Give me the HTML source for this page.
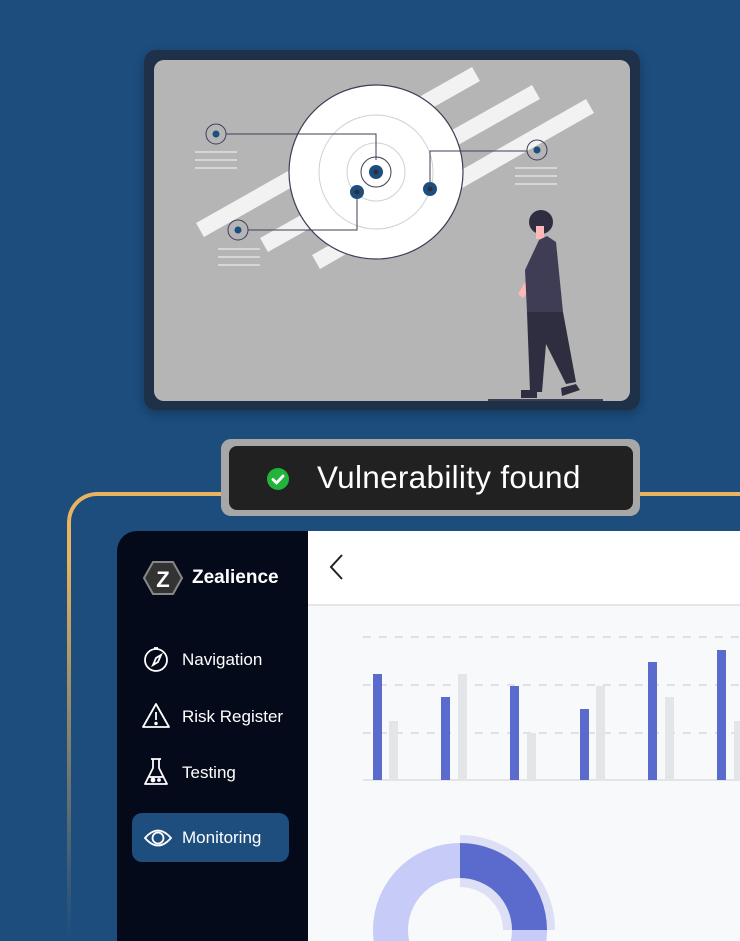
<!DOCTYPE html>
<html><head><meta charset="utf-8"><style>
*{margin:0;padding:0;box-sizing:border-box}
html,body{width:740px;height:941px;overflow:hidden}
body{background:#1c4d7d;position:relative;font-family:"Liberation Sans",sans-serif}
.abs{position:absolute}
.nav{position:absolute;left:182px;color:#fff;font-size:17px}
</style></head><body>
<div class="abs" style="left:144px;top:50px;width:496px;height:360px;background:#1f3149;border-radius:12px;box-shadow:0 4px 10px rgba(0,0,0,.25)"></div>
<svg class="abs" style="left:154px;top:60px" width="476" height="341" viewBox="154 60 476 341">
<defs><clipPath id="c"><rect x="154" y="60" width="476" height="341" rx="10"/></clipPath></defs>
<g clip-path="url(#c)">
<rect x="154" y="60" width="476" height="341" fill="#b5b5b5"/>
<g stroke="#f2f2f2" stroke-width="16" stroke-linecap="butt">
<line x1="200" y1="230" x2="476" y2="74"/>
<line x1="264" y1="245" x2="536" y2="92"/>
<line x1="316" y1="262" x2="590" y2="106"/>
</g>
<circle cx="376" cy="172" r="87" fill="#fff" stroke="#3f3d56" stroke-width="1.2"/>
<circle cx="376" cy="172" r="57" fill="none" stroke="#d0d0d0"/>
<circle cx="376" cy="172" r="29" fill="none" stroke="#d0d0d0"/>
<g fill="none" stroke="#3f3d56" stroke-width="1">
<polyline points="226,134 376,134 376,160"/>
<polyline points="430,182 430,151 527,151"/>
<polyline points="248,230 357,230 357,199"/>
<circle cx="216" cy="134" r="10"/><circle cx="537" cy="150" r="10"/><circle cx="238" cy="230" r="10"/>
<circle cx="376" cy="172" r="15"/>
</g>
<g fill="#1d4e7e"><circle cx="216" cy="134" r="3.5"/><circle cx="537" cy="150" r="3.5"/><circle cx="238" cy="230" r="3.5"/>
<circle cx="376" cy="172" r="7"/><circle cx="357" cy="192" r="7"/><circle cx="430" cy="189" r="7"/></g>
<g fill="#2f2e41"><circle cx="376" cy="172" r="2.5"/><circle cx="357" cy="192" r="2.5"/><circle cx="430" cy="189" r="2.5"/></g>
<g stroke="#d6d6d6" stroke-width="2"><line x1="195" y1="152" x2="237" y2="152"/><line x1="195" y1="160" x2="237" y2="160"/><line x1="195" y1="168" x2="237" y2="168"/>
<line x1="515" y1="168" x2="557" y2="168"/><line x1="515" y1="176" x2="557" y2="176"/><line x1="515" y1="184" x2="557" y2="184"/>
<line x1="218" y1="249" x2="260" y2="249"/><line x1="218" y1="257" x2="260" y2="257"/><line x1="218" y1="265" x2="260" y2="265"/></g>
<line x1="488" y1="400" x2="603" y2="400" stroke="#3f3d56" stroke-width="2"/>
<circle cx="541" cy="222" r="12" fill="#2f2e41"/>
<rect x="536" y="226" width="8" height="13" fill="#ffb8b8"/>
<path d="M527 279 l-9 15 l5 4 l8 -10z" fill="#ffb8b8"/>
<path d="M547 236 l-8 4 l-14 30 l2 42 l36 0 l-3 -30 l-4 -40 z" fill="#3f3d56"/>
<path d="M527 312 l36 0 l13 70 l-10 2 l-20 -40 l-4 48 l-12 0 z" fill="#2f2e41"/>
<path d="M521 390 l16 0 l0 8 l-16 0z M561 388 l15 -4 l4 6 l-18 6z" fill="#2f2e41"/>
</g></svg>

<div class="abs" style="left:67px;top:492px;width:673px;height:449px;border:4px solid #e8b45f;border-right:none;border-bottom:none;border-radius:30px 0 0 0;-webkit-mask-image:linear-gradient(to bottom,#000 15%,rgba(0,0,0,.15) 85%,transparent);mask-image:linear-gradient(to bottom,#000 15%,rgba(0,0,0,.15) 85%,transparent)"></div>

<div class="abs" style="left:221px;top:439px;width:419px;height:77px;background:#a7a7a7;border-radius:10px"></div>
<div class="abs" style="left:229px;top:446px;width:404px;height:64px;background:#212121;border-radius:8px"></div>
<svg class="abs" style="left:267px;top:468px" width="22" height="22"><circle cx="11" cy="11" r="11" fill="#22b33a"/><path d="M6 11.5 l3.5 3.5 l6.5 -7" stroke="#fff" stroke-width="2.8" fill="none" stroke-linecap="round" stroke-linejoin="round"/></svg>
<div class="abs" style="left:317px;top:459px;color:#fff;font-size:31.5px;letter-spacing:0.3px">Vulnerability found</div>

<div class="abs" style="left:117px;top:531px;width:191px;height:410px;background:#050a1a;border-radius:20px 0 0 0"></div>
<div class="abs" style="left:308px;top:531px;width:432px;height:75px;background:#fff;border-bottom:2px solid #e4e6ea"></div>
<div class="abs" style="left:308px;top:606px;width:432px;height:335px;background:#f8f9fb"></div>
<svg class="abs" style="left:326px;top:552px" width="20" height="30"><path d="M16 3 L5 15 L16 27" stroke="#222" stroke-width="2" fill="none"/></svg>

<svg class="abs" style="left:142px;top:560px" width="42" height="36"><polygon points="11,2 31,2 40,18 31,34 11,34 2,18" fill="#333" stroke="#888" stroke-width="2"/><text x="21" y="27" text-anchor="middle" fill="#fff" font-family="Liberation Sans" font-weight="bold" font-size="22">Z</text></svg>
<div class="abs" style="left:192px;top:567px;color:#fff;font-size:19px;font-weight:bold">Zealience</div>

<svg class="abs" style="left:143px;top:645px" width="28" height="28" fill="none" stroke="#fff" stroke-width="1.8"><circle cx="13" cy="15" r="11"/><path d="M11 3 h4"/><path d="M18 10 l-3 7 l-5 3 l3 -7z"/></svg>
<div class="nav" style="top:650px">Navigation</div>
<svg class="abs" style="left:142px;top:702px" width="30" height="28" fill="none" stroke="#fff" stroke-width="1.8"><path d="M14 2 L27 25 L1 25 Z" stroke-linejoin="round"/><path d="M14 10 v8"/><circle cx="14" cy="21.5" r="0.8" fill="#fff"/></svg>
<div class="nav" style="top:707px">Risk Register</div>
<svg class="abs" style="left:142px;top:757px" width="30" height="30" fill="none" stroke="#fff" stroke-width="1.8"><path d="M9 2 h10 M11 2 v9 L3 27 h22 L17 11 V2" stroke-linejoin="round"/><path d="M6 20 h16"/><circle cx="11" cy="23" r="1.5" fill="#fff"/><circle cx="17" cy="23" r="1" fill="#fff"/></svg>
<div class="nav" style="top:763px">Testing</div>
<div class="abs" style="left:132px;top:813px;width:157px;height:49px;background:#1d4e7e;border-radius:10px"></div>
<svg class="abs" style="left:143px;top:826px" width="30" height="24" fill="none" stroke="#fff" stroke-width="1.8"><path d="M2 12 Q15 -3 28 12 Q15 27 2 12Z"/><circle cx="15" cy="12" r="5.5"/></svg>
<div class="nav" style="top:828px">Monitoring</div>

<svg class="abs" style="left:308px;top:606px" width="432" height="335">
<g stroke="#dfe1e6" stroke-width="2" stroke-dasharray="8 8"><line x1="55" y1="31" x2="432" y2="31"/><line x1="55" y1="79" x2="432" y2="79"/><line x1="55" y1="127" x2="432" y2="127"/></g>
<line x1="55" y1="174" x2="432" y2="174" stroke="#e2e4e8" stroke-width="2"/>
<g fill="#5b6bcd"><rect x="65" y="68" width="9" height="106"/><rect x="133" y="91" width="9" height="83"/><rect x="202" y="80" width="9" height="94"/><rect x="272" y="103" width="9" height="71"/><rect x="340" y="56" width="9" height="118"/><rect x="409" y="44" width="9" height="130"/></g>
<g fill="#e4e5e9"><rect x="81" y="115" width="9" height="59"/><rect x="150" y="68" width="9" height="106"/><rect x="219" y="127" width="9" height="47"/><rect x="288" y="80" width="9" height="94"/><rect x="357" y="91" width="9" height="83"/><rect x="426" y="115" width="9" height="59"/></g>
<circle cx="152" cy="324" r="69.5" fill="none" stroke="#c6cbf8" stroke-width="35"/>
<path d="M152 229 A95 95 0 0 1 247 324 L195 324 A43 43 0 0 0 152 281 Z" fill="#dde0f5"/>
<path d="M152 237 A87 87 0 0 1 239 324 L204 324 A52 52 0 0 0 152 272 Z" fill="#5b6bcd"/>
</svg>
</body></html>
